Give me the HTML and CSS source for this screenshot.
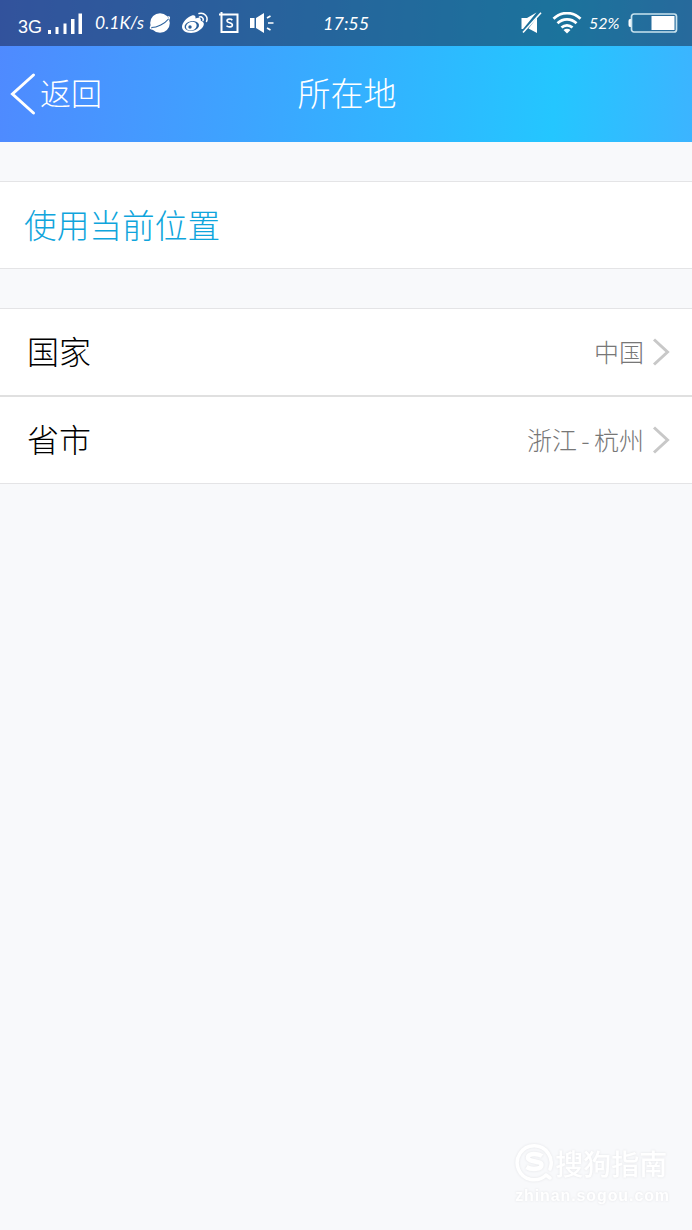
FILE: index.html
```
<!DOCTYPE html>
<html lang="zh-CN">
<head>
  <meta charset="UTF-8">
  <meta name="viewport" content="width=device-width, initial-scale=1.0">
  <title>所在地</title>
  <link rel="stylesheet" href="styles.css">
</head>
<body>

  <header class="header">
    <!-- Status bar -->
    <div class="status-bar">
      <div class="status-left">
        <span class="network">3G</span>
        <svg class="signal" width="36" height="22" viewBox="0 0 36 22" fill="#fff">
          <rect x="1" y="17" width="3" height="4"/>
          <rect x="8.500" y="14" width="3" height="7"/>
          <rect x="16.500" y="10.500" width="3" height="10.500"/>
          <rect x="24" y="6" width="3.500" height="15"/>
          <rect x="31.500" y="0.500" width="3.500" height="20.500"/>
        </svg>
        <span class="speed">0.1K/s</span>
        <svg class="planet" width="24" height="22" viewBox="0 0 24 22">
          <circle cx="12" cy="11" r="9.800" fill="#fff"/>
          <path d="M19.500 5c2.500-.5 2.500 1 .5 3.500M3.500 13.500c-2 2.500-1.500 3.800 1.500 3.500" fill="none" stroke="#fff" stroke-width="1.300"/>
          <path d="M3.500 15.500C9 15.500 17 11.500 20.500 7" fill="none" stroke="#285f9b" stroke-width="1.100"/>
        </svg>
        <svg class="weibo" width="28" height="22" viewBox="0 0 28 22">
          <path d="M11 3.500c2-.8 4 .2 3.500 3 3-1.300 6-.8 5.300 2.300 3.200 1 4 3.500 2 6.300C19.500 18.500 15 21 10 21 4.500 21 1 18.500 1 14.800 1 10.500 6.500 5 11 3.500z" fill="#fff"/>
          <ellipse cx="10.800" cy="14" rx="7.300" ry="4.800" transform="rotate(-10 10.800 14)" fill="#285f9b"/>
          <ellipse cx="10.300" cy="14.200" rx="5.500" ry="4.200" transform="rotate(-20 10.300 14.200)" fill="#fff"/>
          <circle cx="9" cy="15" r="1.700" fill="#285f9b"/>
          <path d="M18 1.500c5.500-1.500 9.500 3.500 7.500 8M18.500 5c2.500-.7 4.300 1.300 3.500 3.500" fill="none" stroke="#fff" stroke-width="1.500" stroke-linecap="round"/>
        </svg>
        <svg class="scan" width="20" height="22" viewBox="0 0 20 22">
          <path d="M0 2.500H18.500V20H2.500V0" fill="none" stroke="#fff" stroke-width="2"/>
          <path d="M13.300 8.200C12 6.500 8 6.700 8 8.900c0 2.300 5.400 1.500 5.400 4.100 0 2.300-4.300 2.500-5.900.7" fill="none" stroke="#fff" stroke-width="1.600"/>
        </svg>
        <svg class="speaker" width="25" height="22" viewBox="0 0 25 22">
          <path d="M0 6h4.500v10H0zM6 6l8-5v20l-8-5z" fill="#fff"/>
          <path d="M17 6l3.500-2M18 11h5.500M17 16l3.500 2" stroke="#fff" stroke-width="1.700"/>
        </svg>
      </div>
      <div class="clock">17:55</div>
      <div class="status-right">
        <svg class="mute" width="21" height="22" viewBox="0 0 21 22">
          <path d="M.5 6H6l9.500-5.500L2 17H.5zM16 5.500V21l-8.500-4.500z" fill="#fff"/>
          <path d="M2 20.500L20 .8" stroke="#fff" stroke-width="1.600"/>
        </svg>
        <svg class="wifi" width="30" height="22" viewBox="0 0 30 22">
          <path d="M1.500 6.800C9-.8 21-.8 28.500 6.800M5.500 11.300c5.300-5.200 13.700-5.200 19 0M9.500 15.600c3.200-3 7.800-3 11 0" fill="none" stroke="#fff" stroke-width="2.700"/>
          <path d="M11.500 18c2-1.800 5-1.800 7 0L15 21.500z" fill="#fff"/>
        </svg>
        <span class="percent">52%</span>
        <svg class="battery" width="50" height="20" viewBox="0 0 50 20">
          <path d="M3 6H2Q.5 6 .5 8v4q0 2 1.500 2h1z" fill="#fff"/>
          <rect x="3.500" y="1" width="45" height="18" rx="2.500" fill="none" stroke="#c9e3ee" stroke-width="1.700"/>
          <rect x="23.500" y="3" width="23" height="14" fill="#fff"/>
        </svg>
      </div>
    </div>

    <!-- Title bar -->
    <div class="nav">
      <a class="back">
        <svg width="26" height="44" viewBox="0 0 26 44">
          <path d="M23.500 3L2.500 22l21 19" fill="none" stroke="#fff" stroke-width="3" stroke-linecap="round"/>
        </svg>
        <span class="back-text">返回</span>
      </a>
      <h1 class="title">所在地</h1>
    </div>
  </header>

  <main>
    <section class="group">
      <div class="row row-link">使用当前位置</div>
    </section>

    <section class="group">
      <div class="row">
        <span class="label">国家</span>
        <span class="value">中国</span>
        <svg class="arrow" width="18" height="28" viewBox="0 0 18 28">
          <path d="M2 1.500L15.500 14 2 26.500" fill="none" stroke="#c8c8c8" stroke-width="3"/>
        </svg>
      </div>
      <div class="row">
        <span class="label">省市</span>
        <span class="value">浙江<span class="dash">-</span>杭州</span>
        <svg class="arrow" width="18" height="28" viewBox="0 0 18 28">
          <path d="M2 1.500L15.500 14 2 26.500" fill="none" stroke="#c8c8c8" stroke-width="3"/>
        </svg>
      </div>
    </section>
  </main>

  <!-- Watermark -->
  <div class="watermark">
    <div class="brand">
      <svg width="40" height="40" viewBox="0 0 40 40">
        <path d="M31 32A17 17 0 1 1 35 26M31 32l4 3" fill="none" stroke="#fff" stroke-width="3.500" stroke-linecap="round"/>
        <path d="M27 13c-4-3-14-3-14 1.500 0 5 13.500 3 13.500 7.500 0 4.500-10 5-15 2" fill="none" stroke="#fff" stroke-width="4.500"/>
      </svg>
      <span>搜狗指南</span>
    </div>
    <div class="site">zhinan.sogou.com</div>
  </div>

</body>
</html>
```
FILE: styles.css
```
* {
  box-sizing: border-box;
}

body {
  margin: 0;
  height: 1230px;
  background-color: #f8f9fb;
  font-family: "Noto Sans CJK SC", sans-serif;
  font-weight: 300;
  overflow: hidden;
  position: relative;
}

svg {
  display: block;
  flex-shrink: 0;
}

.header {
  height: 142px;
  background: linear-gradient(94deg, #4f8aff 0%, #3da4ff 36%, #24c6ff 80%, #3cb4ff 100%);
  color: #fff;
}

/* Status bar */
.status-bar {
  display: flex;
  height: 46px;
  background-color: rgba(18, 18, 40, 0.46);
  font-family: Lato, sans-serif;
  font-style: italic;
  font-size: 18px;
  font-weight: 400;
  line-height: 46px;
}

.status-left {
  display: flex;
  align-items: center;
  width: 323px;
  padding-left: 18px;
}

.network {
  width: 29px;
  padding-top: 7px;
  font-family: "Liberation Sans", sans-serif;
  font-size: 18px;
  font-style: normal;
}

.signal {
  margin-top: 2px;
}

.speed {
  width: 53px;
  margin-left: 12px;
  font-size: 17.500px;
  white-space: nowrap;
}

.weibo {
  margin-left: 9px;
}

.scan {
  margin-left: 10px;
}

.speaker {
  margin-left: 11px;
}

.clock {
  flex: 1;
}

.status-right {
  display: flex;
  align-items: center;
  padding-right: 14px;
}

.wifi {
  margin-left: 10px;
}

.percent {
  width: 34px;
  margin: 0 5px 0 7px;
  font-size: 16px;
}

/* Title bar */
.nav {
  display: grid;
  grid-template-columns: 1fr auto 1fr;
  align-items: center;
  height: 96px;
}

.back {
  display: flex;
  align-items: center;
  gap: 4px;
  padding-left: 10px;
  font-size: 31px;
  line-height: 44px;
}

.back-text {
  padding-bottom: 4px;
}

.title {
  margin: 0;
  padding: 0 0 4px 2px;
  font-size: 33px;
  font-weight: 300;
  line-height: 44px;
}

/* List */
.group {
  margin-top: 39px;
  border-top: 1px solid #e4e4e6;
  border-bottom: 1px solid #e4e4e6;
  background-color: #fff;
}

.row {
  display: flex;
  align-items: center;
  height: 86px;
  padding: 0 22px 0 27px;
}

.row + .row {
  height: 88px;
  border-top: 2px solid #e0e0e0;
}

.row-link {
  padding: 0 0 4px 24px;
  color: #0fa5dc;
  font-size: 32.700px;
}

.label {
  flex: 1;
  padding-bottom: 4px;
  color: #000;
  font-size: 32px;
}

.value {
  margin-right: 8px;
  padding-bottom: 3px;
  color: #777;
  font-size: 25px;
}

.dash {
  display: inline-block;
  width: 17px;
  text-align: center;
}

/* Watermark */
.watermark {
  position: absolute;
  right: 22px;
  bottom: 23px;
  color: #fff;
  filter: drop-shadow(0 0 1px #e2e3e6);
}

.brand {
  display: flex;
  align-items: center;
  padding: 0 0 2px 4px;
  font-size: 28px;
  font-weight: 500;
  line-height: 40px;
}

.site {
  padding-left: 4px;
  font-family: "Liberation Sans", sans-serif;
  font-size: 16px;
  font-weight: 700;
  letter-spacing: 0.900px;
  line-height: 22px;
}
```
